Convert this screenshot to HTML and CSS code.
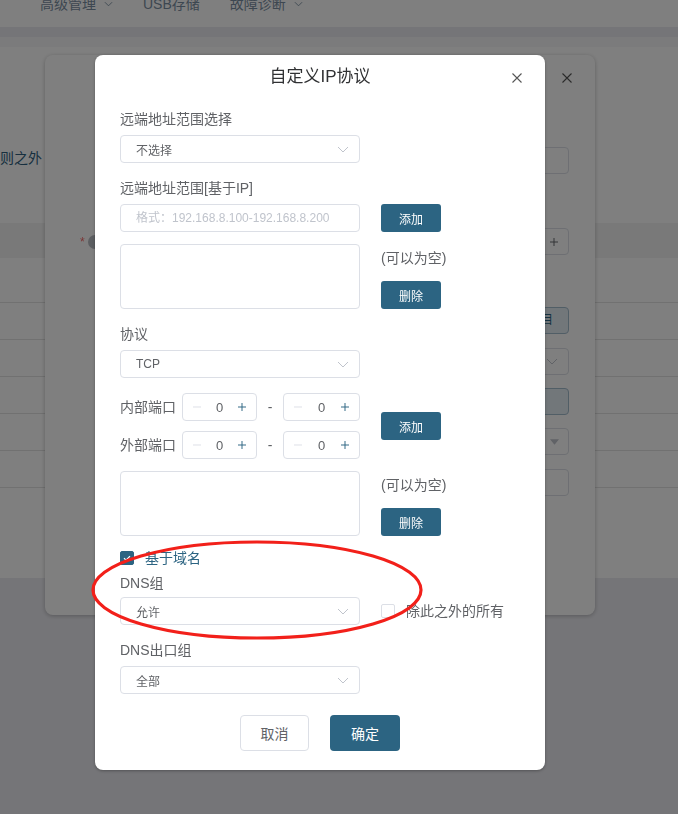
FILE: index.html
```html
<!DOCTYPE html>
<html lang="zh-CN">
<head>
    <meta charset="UTF-8">
    <meta name="viewport" content="width=device-width, initial-scale=1.0">
    <title>自定义IP协议</title>
    <link rel="stylesheet" href="styles.css">
</head>
<body>

    <!-- page behind the dialogs -->
    <div class="page">
        <div class="topnav">
            <span class="nav-item"><svg class="nav-caret" viewBox="0 0 10 6"><path d="M1 1l4 4 4-4"/></svg></span>
            <span class="nav-item">高级管理<svg class="nav-caret" viewBox="0 0 10 6"><path d="M1 1l4 4 4-4"/></svg></span>
            <span class="nav-item">USB存储</span>
            <span class="nav-item">故障诊断<svg class="nav-caret" viewBox="0 0 10 6"><path d="M1 1l4 4 4-4"/></svg></span>
        </div>
        <div class="content">
            <div class="content-strip"></div>
            <p class="content-hint">规则之外</p>
            <div class="table">
                <div class="table-head"></div>
                <div class="table-row first"></div>
                <div class="table-row"></div>
                <div class="table-row"></div>
                <div class="table-row"></div>
                <div class="table-row"></div>
                <div class="table-row"></div>
                <div class="table-row last"></div>
            </div>
        </div>
    </div>

    <!-- first dialog (under the mask) -->
    <div class="dialog dialog-back">
        <div class="back-head">
            <svg class="close-icon" viewBox="0 0 10 10"><path d="M0.5 0.5l9 9M9.5 0.5l-9 9"/></svg>
        </div>
        <div class="back-row r1"><div class="back-input"></div></div>
        <div class="back-row r2">
            <span class="req">*</span>
            <span class="help-dot"></span>
            <div class="back-input plus-box">
                <svg class="pm" viewBox="0 0 10 10"><path d="M0 5h10M5 0v10"/></svg>
            </div>
        </div>
        <div class="back-row r3"><div class="back-btn">选择条目</div></div>
        <div class="back-row r4">
            <div class="back-input">
                <svg class="chev" viewBox="0 0 12 7"><path d="M1 1l5 5 5-5"/></svg>
            </div>
        </div>
        <div class="back-row r5"><div class="back-btn"></div></div>
        <div class="back-row r6">
            <div class="back-input">
                <svg class="tri" viewBox="0 0 10 6"><path d="M0 0h10L5 6z"/></svg>
            </div>
        </div>
        <div class="back-row r7"><div class="back-input"></div></div>
    </div>

    <div class="mask"></div>

    <!-- active dialog -->
    <div class="dialog dialog-front">
        <div class="dlg-head">
            <span class="dlg-title">自定义IP协议</span>
            <svg class="close-icon dlg-close" viewBox="0 0 10 10"><path d="M0.5 0.5l9 9M9.5 0.5l-9 9"/></svg>
        </div>

        <div class="dlg-body">
            <div class="field">
                <div class="field-label">远端地址范围选择</div>
                <div class="select">
                    <span>不选择</span>
                    <svg class="chev" viewBox="0 0 12 7"><path d="M1 1l5 5 5-5"/></svg>
                </div>
            </div>

            <div class="field">
                <div class="field-label">远端地址范围[基于IP]</div>
                <div class="line">
                    <input class="text-input" type="text" placeholder="格式：192.168.8.100-192.168.8.200">
                    <button class="btn">添加</button>
                </div>
                <div class="line list-line">
                    <div class="list-box"></div>
                    <div class="side">
                        <span class="side-note">(可以为空)</span>
                        <button class="btn">删除</button>
                    </div>
                </div>
            </div>

            <div class="field">
                <div class="field-label">协议</div>
                <div class="select">
                    <span>TCP</span>
                    <svg class="chev" viewBox="0 0 12 7"><path d="M1 1l5 5 5-5"/></svg>
                </div>
            </div>

            <div class="ports">
                <div class="port-rows">
                    <div class="port-row">
                        <span class="port-label">内部端口</span>
                        <div class="num">
                            <svg class="pm minus" viewBox="0 0 10 10"><path d="M0 5h10"/></svg>
                            <span>0</span>
                            <svg class="pm" viewBox="0 0 10 10"><path d="M0 5h10M5 0v10"/></svg>
                        </div>
                        <span class="dash">-</span>
                        <div class="num">
                            <svg class="pm minus" viewBox="0 0 10 10"><path d="M0 5h10"/></svg>
                            <span>0</span>
                            <svg class="pm" viewBox="0 0 10 10"><path d="M0 5h10M5 0v10"/></svg>
                        </div>
                    </div>
                    <div class="port-row">
                        <span class="port-label">外部端口</span>
                        <div class="num">
                            <svg class="pm minus" viewBox="0 0 10 10"><path d="M0 5h10"/></svg>
                            <span>0</span>
                            <svg class="pm" viewBox="0 0 10 10"><path d="M0 5h10M5 0v10"/></svg>
                        </div>
                        <span class="dash">-</span>
                        <div class="num">
                            <svg class="pm minus" viewBox="0 0 10 10"><path d="M0 5h10"/></svg>
                            <span>0</span>
                            <svg class="pm" viewBox="0 0 10 10"><path d="M0 5h10M5 0v10"/></svg>
                        </div>
                    </div>
                </div>
                <button class="btn">添加</button>
            </div>

            <div class="line list-line">
                <div class="list-box"></div>
                <div class="side">
                    <span class="side-note">(可以为空)</span>
                    <button class="btn">删除</button>
                </div>
            </div>

            <label class="check checked domain-check">
                <span class="check-box"><svg viewBox="0 0 14 14"><path d="M3.5 7.2l2.4 2.4 4.6-4.8"/></svg></span>
                <span>基于域名</span>
            </label>

            <div class="field dns-field">
                <div class="field-label">DNS组</div>
                <div class="line">
                    <div class="select">
                        <span>允许</span>
                        <svg class="chev" viewBox="0 0 12 7"><path d="M1 1l5 5 5-5"/></svg>
                    </div>
                    <label class="check">
                        <span class="check-box"></span>
                        <span>除此之外的所有</span>
                    </label>
                </div>
            </div>

            <div class="field">
                <div class="field-label">DNS出口组</div>
                <div class="select">
                    <span>全部</span>
                    <svg class="chev" viewBox="0 0 12 7"><path d="M1 1l5 5 5-5"/></svg>
                </div>
            </div>
        </div>

        <div class="dlg-foot">
            <button class="btn-plain">取消</button>
            <button class="btn-main">确定</button>
        </div>
    </div>

    <!-- red annotation drawn over the screenshot -->
    <svg class="mark" viewBox="0 0 678 814">
        <ellipse cx="257" cy="590" rx="164" ry="48"/>
    </svg>

</body>
</html>
```

FILE: styles.css
```css
/* base */
body {
    margin: 0;
    font-family: "Liberation Sans", "Noto Sans CJK SC", sans-serif;
    background-color: #ebebf1;
    color: #606266;
    overflow: hidden;
}

/* page behind */
.page {
    width: 678px;
}
.topnav {
    height: 27px;
    background: #fff;
    display: flex;
    gap: 30px;
    align-items: flex-start;
    overflow: hidden;
    font-size: 14px;
    color: #7a8ea2;
}
.nav-item {
    display: flex;
    align-items: center;
    gap: 8px;
    line-height: 20px;
    margin-top: -6px;
}
.nav-item:first-child {
    margin-right: 1px;
}
.nav-caret {
    width: 9px;
    height: 6px;
    fill: none;
    stroke: #7a8ea2;
    stroke-width: 1;
}
.content {
    margin-top: 10px;
    background: #fff;
    height: 541px;
}
.content-strip {
    height: 10px;
    background: #f7f7f8;
}
.content-hint {
    margin: 101px 0 0 -14px;
    font-size: 14px;
    line-height: 20px;
    color: #2f5f7f;
}
.table {
    margin-top: 55px;
}
.table-head {
    height: 35px;
    background: #f3f3f3;
}
.table-row {
    height: 36px;
    border-bottom: 1px solid #e2e2e2;
}
.table-row.first {
    height: 44px;
}
.table-row.last {
    border-bottom: none;
}

/* dialogs */
.dialog {
    position: fixed;
    top: 55px;
    background: #fff;
    border-radius: 8px;
    box-sizing: border-box;
}
.close-icon {
    width: 10px;
    height: 10px;
    fill: none;
    stroke: #555;
    stroke-width: 1.1;
}

.dialog-back {
    left: 45px;
    width: 550px;
    height: 560px;
    box-shadow: 0 1px 4px rgba(0, 0, 0, 0.25);
}
.back-head {
    height: 46px;
    display: flex;
    justify-content: flex-end;
    align-items: center;
    padding-right: 23px;
}
.back-row {
    display: flex;
    align-items: center;
    justify-content: flex-end;
    padding-right: 26px;
}
.r1 { margin-top: 46px; }
.r2 { margin-top: 54px; padding-left: 35px; }
.r3 { margin-top: 52px; }
.r4 { margin-top: 14px; }
.r5 { margin-top: 13px; }
.r6 { margin-top: 13px; }
.r7 { margin-top: 14px; }
.back-input {
    width: 130px;
    height: 27px;
    box-sizing: border-box;
    border: 1px solid #dcdfe6;
    border-radius: 4px;
    display: flex;
    align-items: center;
    justify-content: flex-end;
    padding-right: 10px;
}
.r6 .back-input {
    padding-right: 9px;
}
.plus-box .pm {
    stroke: #606266;
}
.req {
    color: #f56c6c;
    font-size: 12px;
    line-height: 12px;
}
.help-dot {
    width: 14px;
    height: 14px;
    margin-left: 3px;
    border-radius: 50%;
    background: #b9bcc2;
}
.r2 .back-input {
    margin-left: auto;
}
.back-btn {
    width: 80px;
    height: 27px;
    box-sizing: border-box;
    border: 1px solid #a3bccd;
    border-radius: 4px;
    background: #e5eef4;
    color: #2c6482;
    font-size: 12px;
    line-height: 25px;
    text-align: center;
}
.tri {
    width: 9px;
    height: 6px;
    fill: #c0c4cc;
}

.mask {
    position: fixed;
    inset: 0;
    background: rgba(0, 0, 0, 0.5);
}

/* active dialog */
.dialog-front {
    left: 95px;
    width: 450px;
    height: 715px;
    padding: 0 25px;
    box-shadow: 0 1px 3px rgba(0, 0, 0, 0.3);
}
.dlg-head {
    position: relative;
    padding-top: 10px;
    text-align: center;
}
.dlg-title {
    font-size: 17px;
    line-height: 24px;
    color: #303133;
}
.dlg-close {
    position: absolute;
    right: -2px;
    top: 18px;
}
.dlg-body {
    padding-top: 20px;
}
.field + .field,
.list-line + .field,
.field + .ports {
    margin-top: 15px;
}
.field-label {
    font-size: 14px;
    line-height: 20px;
    margin-bottom: 6px;
}
.dns-field {
    margin-top: 5px;
}
.dns-field .field-label {
    margin-bottom: 4px;
}
.line {
    display: flex;
    align-items: center;
    gap: 21px;
}
.list-line {
    margin-top: 12px;
    align-items: stretch;
}
.select,
.text-input {
    width: 240px;
    height: 28px;
    box-sizing: border-box;
    border: 1px solid #dcdfe6;
    border-radius: 4px;
    background: #fff;
    display: flex;
    align-items: center;
    justify-content: space-between;
    padding: 0 10px 0 15px;
    font-family: inherit;
    font-size: 12px;
    color: #606266;
}
.text-input::placeholder {
    color: #c0c4cc;
}
.chev {
    width: 12px;
    height: 7px;
    fill: none;
    stroke: #c0c4cc;
    stroke-width: 1;
}
.btn {
    width: 60px;
    height: 28px;
    border: none;
    border-radius: 3px;
    background: #2c6482;
    color: #fff;
    font-family: inherit;
    font-size: 12px;
    padding: 0;
}
.list-box {
    width: 240px;
    height: 65px;
    box-sizing: border-box;
    border: 1px solid #dcdfe6;
    border-radius: 4px;
}
.side {
    display: flex;
    flex-direction: column;
    justify-content: space-between;
    align-items: flex-start;
    padding-top: 4px;
}
.side-note {
    font-size: 14px;
    line-height: 20px;
    white-space: nowrap;
}

/* ports */
.ports {
    display: flex;
    align-items: center;
    gap: 21px;
}
.port-rows {
    display: flex;
    flex-direction: column;
    gap: 10px;
}
.port-row {
    display: flex;
    align-items: center;
    width: 240px;
}
.port-label {
    width: 62px;
    font-size: 14px;
    line-height: 20px;
    white-space: nowrap;
}
.num {
    width: 75px;
    height: 28px;
    box-sizing: border-box;
    border: 1px solid #dcdfe6;
    border-radius: 4px;
    display: flex;
    align-items: center;
    justify-content: space-between;
    padding: 0 10px;
    font-size: 13px;
}
.num:last-child {
    width: 77px;
}
.dash {
    flex: 1;
    text-align: center;
    font-size: 14px;
}
.pm {
    width: 8px;
    height: 8px;
    fill: none;
    stroke: #2c6482;
    stroke-width: 1.2;
}
.pm.minus {
    stroke: #dcdfe6;
}

/* checkboxes */
.check {
    display: flex;
    align-items: center;
    gap: 11px;
    font-size: 14px;
    line-height: 20px;
    white-space: nowrap;
}
.check-box {
    width: 14px;
    height: 14px;
    box-sizing: border-box;
    border: 1px solid #dcdfe6;
    border-radius: 2px;
    background: #fff;
}
.check-box svg {
    display: block;
    width: 12px;
    height: 12px;
    fill: none;
    stroke: #fff;
    stroke-width: 1.4;
}
.check.checked {
    color: #2c6482;
}
.check.checked .check-box {
    border-color: #2c6482;
    background: #2c6482;
}
.domain-check {
    margin-top: 12px;
}

/* footer */
.dlg-foot {
    display: flex;
    justify-content: center;
    gap: 21px;
    margin-top: 21px;
}
.btn-plain,
.btn-main {
    height: 36px;
    border-radius: 4px;
    font-family: inherit;
    font-size: 14px;
    padding: 0;
}
.btn-plain {
    width: 69px;
    border: 1px solid #dcdfe6;
    background: #fff;
    color: #606266;
}
.btn-main {
    width: 70px;
    border: none;
    background: #2c6482;
    color: #fff;
}

/* annotation */
.mark {
    position: fixed;
    left: 0;
    top: 0;
    width: 678px;
    height: 814px;
    pointer-events: none;
}
.mark ellipse {
    fill: none;
    stroke: #f2201a;
    stroke-width: 3.2;
}
```
